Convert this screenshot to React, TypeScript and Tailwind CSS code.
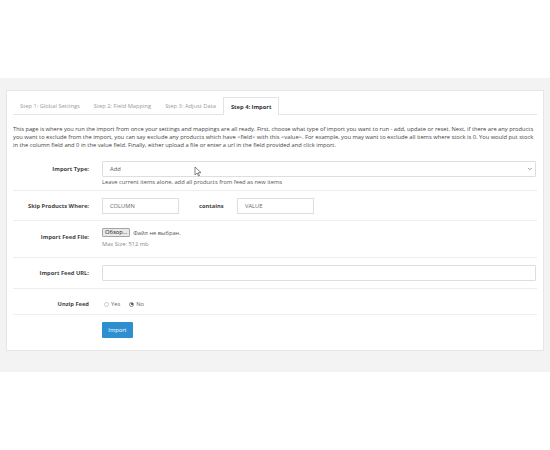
import { ChevronDown } from "lucide-react";

const tabs = ["Step 1: Global Settings", "Step 2: Field Mapping", "Step 3: Adjust Data"];

const Row = ({
  label,
  children,
  className,
  labelClass,
}: {
  label: string;
  children: React.ReactNode;
  className?: string;
  labelClass?: string;
}) => (
  <div className={`flex border-b border-[#eeeeee] ${className ?? ""}`}>
    <div className={`w-[84px] shrink-0 pr-[8px] text-right font-bold text-[#444] ${labelClass ?? "pt-[4px]"}`}>
      {label}
    </div>
    <div className="ml-[5px] flex-1 pr-[1px]">{children}</div>
  </div>
);

const App = () => {
  return (
    <div className="h-[450px] w-[550px] bg-white font-['Open_Sans',sans-serif] text-[5.75px] leading-[8px] text-[#555]">
      <div className="h-[78px]" />
      <div className="h-[294px] bg-[#f3f3f3] px-[6px] pt-[12px]">
        <div className="relative h-[261px] border border-[#e6e6e6] bg-white px-[6px] pt-[7px]">
          {/* tabs */}
          <div className="flex h-[17px] items-end border-b border-[#e4e4e4]">
            {tabs.map((t) => (
              <div key={t} className="flex h-[17px] items-center px-[7px] text-[#9a9a9a]">
                {t}
              </div>
            ))}
            <div className="-mb-px flex h-[18px] items-center border border-b-0 border-[#e4e4e4] bg-white px-[7px] font-bold text-[#333]">
              Step 4: Import
            </div>
          </div>

          <p className="mt-[10px] pr-[2px] text-[#444]">
            This page is where you run the import from once your settings and mappings are all ready. First, choose
            what type of import you want to run - add, update or reset. Next, if there are any products you want to
            exclude from the import, you can say exclude any products which have &lt;field&gt; with this &lt;value&gt;.
            For example, you may want to exclude all items where stock is 0. You would put stock in the column field
            and 0 in the value field. Finally, either upload a file or enter a url in the field provided and click
            import.
          </p>

          <Row label="Import Type:" className="mt-[8px] h-[34px] pt-[4px]">
            <div className="flex h-[16px] items-center justify-between rounded-[1px] border border-[#dedede] pl-[7px] pr-[2px] text-[#555]">
              <span>Add</span>
              <ChevronDown className="h-[6px] w-[6px] text-[#777]" strokeWidth={3} />
            </div>
            <div className="mt-[1px]">Leave current items alone, add all products from feed as new items</div>
          </Row>

          <Row label="Skip Products Where:" className="h-[30px] pt-[7px]">
            <div className="flex items-center">
              <div className="flex h-[16px] w-[77px] items-center border border-[#dedede] pl-[7px] text-[#666]">
                COLUMN
              </div>
              <div className="ml-[20px] w-[38px] font-bold text-[#444]">contains</div>
              <div className="flex h-[16px] w-[77px] items-center border border-[#dedede] pl-[7px] text-[#666]">
                VALUE
              </div>
            </div>
          </Row>

          <Row label="Import Feed File:" className="h-[37px] pt-[4px]" labelClass="pt-[8px]">
            <div className="flex items-center gap-[3px] pt-[3px] text-[#555]">
              <span className="rounded-[1px] border border-[#a5a5a5] bg-[#e9e9e9] px-[2px] leading-[7px] text-[#222]">
                Обзор...
              </span>
              <span>Файл не выбран.</span>
            </div>
            <div className="mt-[3px] text-[#888]">Max Size: 512 mb</div>
          </Row>

          <Row label="Import Feed URL:" className="h-[31px] pt-[7px]">
            <div className="h-[16px] rounded-[1px] border border-[#dedede]" />
          </Row>

          <Row label="Unzip Feed" className="h-[26px] pt-[5px]" labelClass="pt-[6px]">
            <div className="flex items-center gap-[9px] pl-[2px] pt-[6px] text-[#666]">
              <span className="flex items-center gap-[2px]">
                <span className="h-[5px] w-[5px] rounded-full border border-[#ccc]" />
                Yes
              </span>
              <span className="flex items-center gap-[2px]">
                <span className="flex h-[5px] w-[5px] items-center justify-center rounded-full border border-[#888]">
                  <span className="h-[2px] w-[2px] rounded-full bg-[#333]" />
                </span>
                No
              </span>
            </div>
          </Row>

          <div className="flex pt-[7px]">
            <div className="ml-[89px] flex h-[16px] w-[31px] items-center justify-center rounded-[1px] bg-[#2d8fd0] text-white">
              Import
            </div>
          </div>

          {/* mouse cursor */}
          <svg className="absolute left-[187px] top-[75px]" width="8" height="11" viewBox="0 0 8 11">
            <path d="M1 1 L1 9 L3 7 L4.5 10 L5.5 9.5 L4.2 6.6 L7 6.6 Z" fill="#fff" stroke="#555" strokeWidth="0.7" />
          </svg>
        </div>
      </div>
    </div>
  );
};

export default App;
